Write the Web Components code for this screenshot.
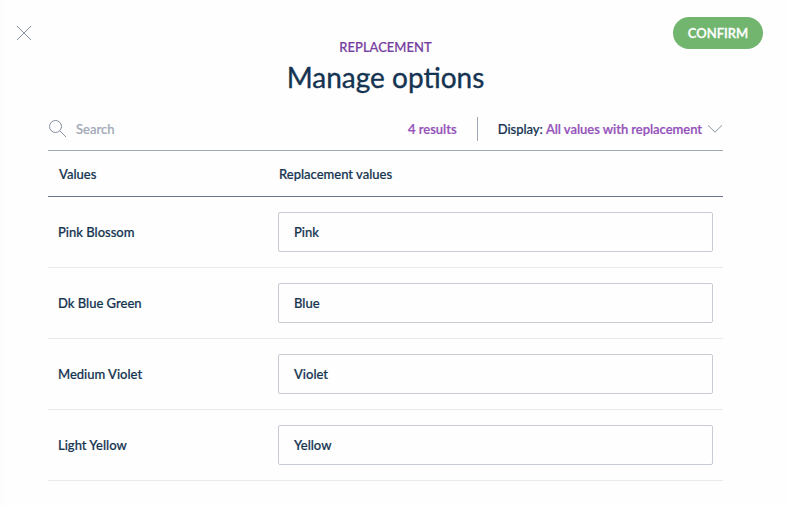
<!DOCTYPE html>
<html lang="en">
<head>
<meta charset="utf-8">
<title>Manage options</title>
<style>
html, body { margin: 0; height: 100%; overflow: hidden; background: #fefefe; }
body { font-family: Lato, "Open Sans", sans-serif; font-size: 13px; line-height: 16px; font-weight: 500; color: #153451; -webkit-text-stroke: .2px currentColor; border-left: 4px solid #fdfdfd; box-sizing: border-box; }
</style>
</head>
<body>
<options-page></options-page>
<script>
const define = (name, html) => {
  const template = document.createElement('template');
  template.innerHTML = html;
  customElements.define(name, class extends HTMLElement {
    constructor() {
      super();
      this.attachShadow({ mode: 'open' }).append(template.content.cloneNode(true));
    }
  });
};

define('close-icon', `
<style>:host{display:block;width:16px;height:16px}svg{display:block}</style>
<svg width="16" height="16" viewBox="0 0 16 16" fill="none" stroke="#67768a" stroke-width=".8"><path d="M1 1 15 15M15 1 1 15"/></svg>`);

define('search-icon', `
<style>:host{display:block;width:18px;height:18px}svg{display:block}</style>
<svg width="18" height="18" viewBox="0 0 18 18" fill="none" stroke="#67768a" stroke-width=".8"><circle cx="6.5" cy="6.5" r="6"/><path d="M10.8 10.8 17 17"/></svg>`);

define('chevron-icon', `
<style>:host{display:block;width:16px;height:10px}svg{display:block}</style>
<svg width="16" height="10" viewBox="0 0 16 10" fill="none" stroke="#67768a" stroke-width=".8"><path d="M1 1.3 8 8.2 15 1.3"/></svg>`);

define('confirm-button', `
<style>:host{display:block}button{display:block;width:90px;height:32px;padding:0;border:0;border-radius:16px;background:#71b56f;color:#fff;font:inherit;font-weight:600;line-height:32px;text-align:center;-webkit-text-stroke:.3px #fff}</style>
<button><slot></slot></button>`);

define('page-header', `
<style>
:host{display:grid;grid-template-columns:90px 1fr 90px;height:110px;padding:0 23px 0 12px;box-sizing:border-box}
close-icon{margin-top:25px}
confirm-button{margin-top:17px}
.titles{text-align:center;padding:39px 8px 0 0}
.kicker{color:#763e9e}
h1{margin:4px 0 0;font-size:28px;line-height:36px;font-weight:400;-webkit-text-stroke:.35px currentColor}
</style>
<close-icon></close-icon>
<div class="titles"><div class="kicker"><slot name="kicker"></slot></div><h1><slot></slot></h1></div>
<confirm-button>CONFIRM</confirm-button>`);

define('search-bar', `
<style>
:host{display:flex;align-items:center;height:41px;box-sizing:border-box;border-bottom:1px solid #a1a9b7;padding-bottom:2px}
search-icon{margin-left:1px}
.search{color:#a1a9b7;margin-left:9px;flex:1}
.purple{color:#9452ba;font-weight:600}
.sep{width:1px;height:24px;background:#a1a9b7;margin:0 20px 0 20px}
.display{letter-spacing:-.045px}
chevron-icon{margin:0 0 0 5px}
</style>
<search-icon></search-icon><span class="search">Search</span>
<span class="purple count"><slot></slot></span><span class="sep"></span>
<span class="display">Display: <span class="purple">All values with replacement</span></span><chevron-icon></chevron-icon>`);

define('table-head', `
<style>:host{display:grid;grid-template-columns:220px 1fr;align-items:center;height:46px;box-sizing:border-box;padding:1px 0 0 11px;border-bottom:1px solid #67768a}</style>
<span>Values</span><span>Replacement values</span>`);

define('value-field', `
<style>:host{display:block;box-sizing:border-box;height:40px;border:1px solid #c7cbd4;border-radius:2px;padding:0 15px;line-height:39px}</style>
<slot></slot>`);

define('value-row', `
<style>:host{display:grid;grid-template-columns:220px 1fr;align-items:center;height:71px;box-sizing:border-box;padding:0 10px;border-bottom:1px solid #e8ebee}</style>
<span><slot name="label"></slot></span><value-field><slot></slot></value-field>`);

define('options-page', `
<style>:host{display:block}main{width:675px;margin-left:44px}</style>
<page-header><span slot="kicker">REPLACEMENT</span>Manage options</page-header>
<main>
<search-bar>4 results</search-bar>
<table-head></table-head>
<value-row><span slot="label">Pink Blossom</span>Pink</value-row>
<value-row><span slot="label">Dk Blue Green</span>Blue</value-row>
<value-row><span slot="label">Medium Violet</span>Violet</value-row>
<value-row><span slot="label">Light Yellow</span>Yellow</value-row>
</main>`);
</script>
</body>
</html>
